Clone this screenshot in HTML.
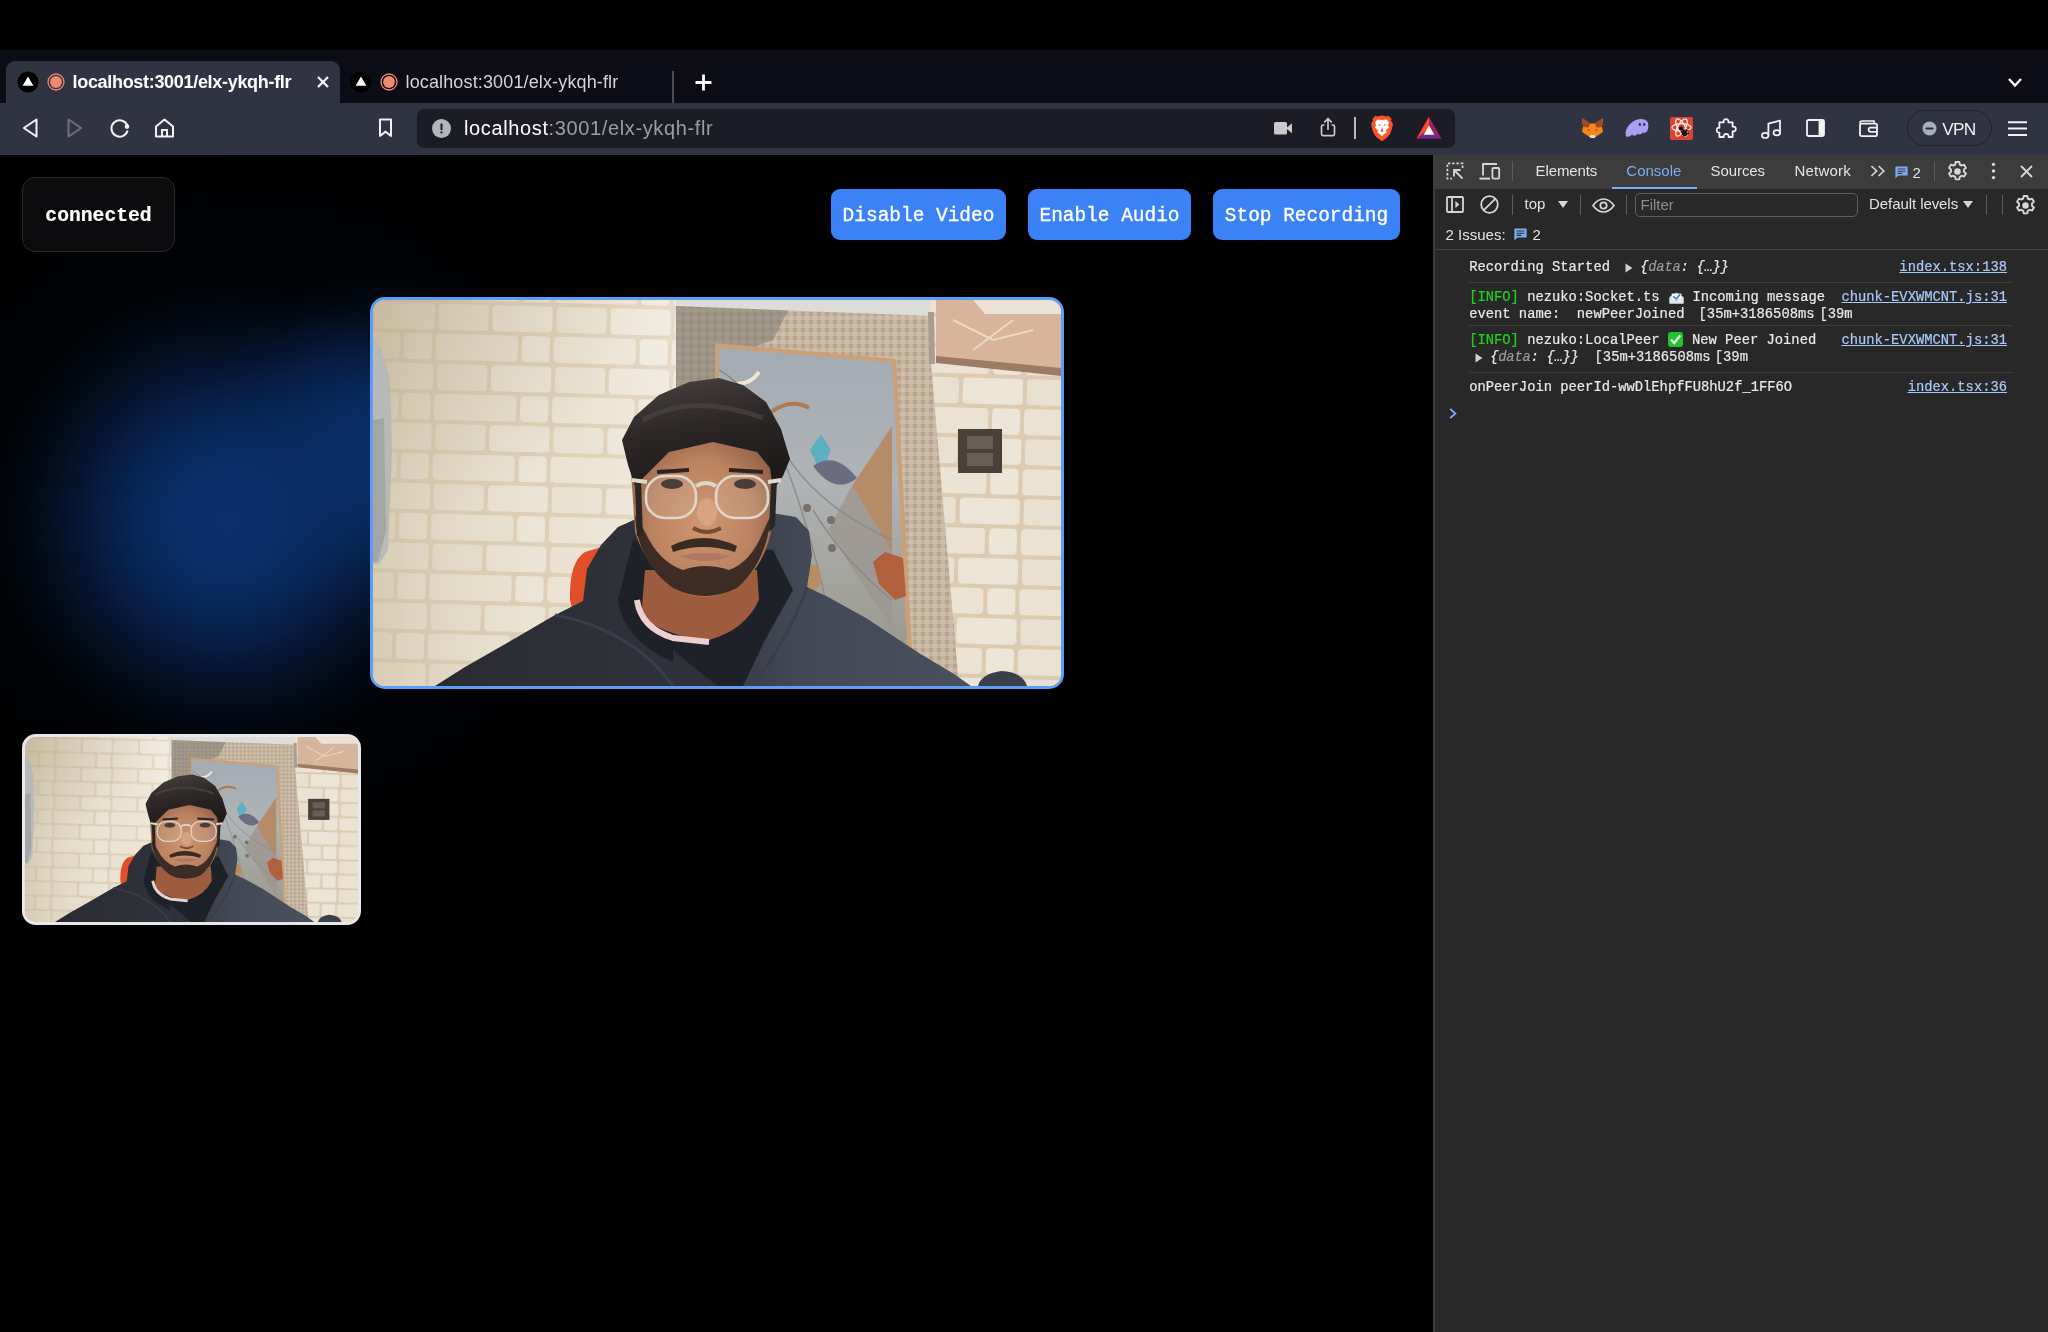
<!DOCTYPE html>
<html>
<head>
<meta charset="utf-8">
<title>localhost:3001/elx-ykqh-flr</title>
<style>
*{box-sizing:border-box;margin:0;padding:0}
html,body{width:2048px;height:1332px;overflow:hidden;background:#000}
body{position:relative;will-change:transform;font-family:"Liberation Sans",sans-serif;color:#fff}
.abs{position:absolute}
svg{position:absolute;overflow:visible}
#frame{left:0;top:50px;width:2048px;height:53px;background:#0c0c16}
#tab1{left:6px;top:61px;width:334px;height:42px;background:#303342;border-radius:9px 9px 0 0}
#toolbar{left:0;top:103px;width:2048px;height:52px;background:#303342}
#urlbar{left:417px;top:109px;width:1037.5px;height:38.5px;background:#1b1c26;border-radius:7px}
.tabtxt{top:71.3px;font-size:18px;line-height:22px;white-space:pre}
#page{left:0;top:155px;width:1433px;height:1177px;background:#000;overflow:hidden}
#glow{left:0;top:0;width:800px;height:800px;
 background:radial-gradient(circle at 226px 365px,rgba(11,47,107,1) 0.0px,rgba(11,47,107,0.97) 50.4px,rgba(11,47,107,0.8) 90.0px,rgba(11,47,107,0.62) 120.0px,rgba(11,47,107,0.48) 139.2px,rgba(11,47,107,0.28) 170.4px,rgba(11,47,107,0.13) 199.2px,rgba(11,47,107,0.04) 225.6px,rgba(11,47,107,0) 240.0px),
 radial-gradient(circle at 380px 295px,rgba(11,47,107,0.9) 0.0px,rgba(11,47,107,0.85) 50.4px,rgba(11,47,107,0.7) 72.0px,rgba(11,47,107,0.5) 99.0px,rgba(11,47,107,0.28) 126.0px,rgba(11,47,107,0.1) 153.0px,rgba(11,47,107,0) 180.0px),
 radial-gradient(circle at 250px 350px,rgba(8,30,70,.16) 0px,rgba(8,30,70,.1) 200px,rgba(8,30,70,.04) 300px,rgba(8,30,70,0) 380px)}
#badge{left:22px;top:22px;width:153px;height:75px;border:1px solid #2a2a2a;border-radius:13px;background:#0b0b0d;
 font-family:"Liberation Mono",monospace;font-weight:bold;font-size:19.7px;line-height:73px;padding-top:2px;text-align:center;color:#fff;-webkit-text-stroke:0.2px #fff}
.btn{top:34px;height:51px;background:#3b82f6;border-radius:9px;font-family:"Liberation Mono",monospace;font-size:19.47px;line-height:50px;padding-top:1.8px;text-align:center;color:#fff;white-space:pre;-webkit-text-stroke:0.35px #fff}
#vid1{left:370px;top:142px;width:694px;height:392px;border:3px solid #5a9ef8;border-radius:15px;overflow:hidden;background:#e6d9c3}
#vid2{left:22px;top:579px;width:339px;height:191px;border:3px solid #e8e8ea;border-radius:14px;overflow:hidden;background:#e6d9c3}
#vid1 svg,#vid2 svg{left:0;top:0;width:100%;height:100%}
#vid1 svg{filter:blur(0.6px)}#vid2 svg{filter:blur(0.3px)}
#dt{left:1433px;top:155px;width:615px;height:1177px;background:#282828;border-left:2px solid #3d3d3d}
#dttabs{left:0;top:0;width:613px;height:34px;background:#3c3c3c}
.dtt{top:7px;font-size:15px;line-height:20px;color:#e3e3e3;white-space:pre;letter-spacing:-0.1px}
.sep{width:1px;background:#5c5c5c}
.mono{font-family:"Liberation Mono",monospace;font-size:13.81px;line-height:17px;color:#e8e8e8;white-space:pre;-webkit-text-stroke:0.22px currentColor}
.lnk{color:#a8c7fa;text-decoration:underline}
.hr{left:34px;width:542.5px;height:1px;background:#3d3d3d}
</style>
</head>
<body>
<svg width="0" height="0" style="position:absolute">
<defs>
<pattern id="brick" width="118" height="60" patternUnits="userSpaceOnUse" patternTransform="rotate(1.5)">
<rect width="118" height="60" fill="#dccbb0"/>
<rect x="2" y="2" width="60" height="26" rx="4" fill="#ece4d4"/>
<rect x="66" y="2" width="50" height="26" rx="4" fill="#e9e0cf"/>
<rect x="-26" y="32" width="54" height="26" rx="4" fill="#ebe2d1"/>
<rect x="32" y="32" width="28" height="26" rx="4" fill="#ede5d6"/>
<rect x="64" y="32" width="54" height="26" rx="4" fill="#ebe2d1"/>
<rect x="92" y="32" width="54" height="26" rx="4" fill="#ebe2d1"/>
</pattern>
<pattern id="mosaic" width="8" height="8" patternUnits="userSpaceOnUse">
<rect width="8" height="8" fill="#c6b5a0"/>
<rect x="0" y="0" width="4" height="4" fill="#cfbfab"/>
<rect x="4" y="4" width="4" height="4" fill="#b8a48d"/>
</pattern>
<linearGradient id="glass" x1="0" y1="0" x2="0" y2="1">
<stop offset="0" stop-color="#a3abb4"/><stop offset="0.4" stop-color="#afb3b6"/><stop offset="0.7" stop-color="#a3a39d"/><stop offset="1" stop-color="#96938a"/>
</linearGradient>
<linearGradient id="wallshade" x1="0" y1="0" x2="1" y2="0">
<stop offset="0" stop-color="#c9bc9f" stop-opacity=".6"/><stop offset="0.35" stop-color="#d9ceb8" stop-opacity=".25"/><stop offset="0.7" stop-color="#f3ecdf" stop-opacity=".15"/><stop offset="1" stop-color="#fff" stop-opacity=".3"/>
</linearGradient>
<linearGradient id="hood" gradientUnits="userSpaceOnUse" x1="60" y1="0" x2="600" y2="0"><stop offset="0" stop-color="#2a2b32"/><stop offset="0.45" stop-color="#30323b"/><stop offset="0.68" stop-color="#434856"/><stop offset="1" stop-color="#4b505f"/></linearGradient>
<linearGradient id="hair" x1="0" y1="0" x2="0.3" y2="1"><stop offset="0" stop-color="#4a4543"/><stop offset="0.5" stop-color="#2d2827"/><stop offset="1" stop-color="#1e1a19"/></linearGradient>
<radialGradient id="vig" cx="0" cy="0" r="1" gradientUnits="userSpaceOnUse" gradientTransform="scale(260 220)"><stop offset="0" stop-color="#b3a486" stop-opacity=".45"/><stop offset="1" stop-color="#b3a486" stop-opacity="0"/></radialGradient>
<radialGradient id="skin" cx="0.5" cy="0.55" r="0.6">
<stop offset="0" stop-color="#cf9773"/><stop offset="0.6" stop-color="#bb8260"/><stop offset="1" stop-color="#8c5d43"/>
</radialGradient>
<symbol id="cam" viewBox="0 0 688 386" preserveAspectRatio="none">
<rect width="688" height="386" fill="url(#brick)"/>
<rect width="303" height="386" fill="url(#wallshade)"/>
<rect width="303" height="260" fill="url(#vig)"/>
<!-- left object -->
<path d="M0 36 L8 48 L17 80 L19 150 L15 250 L6 264 L0 264Z" fill="#b7bab6"/>
<path d="M0 120 L11 118 L13 230 L5 262 L0 262Z" fill="#a3a6a4"/>
<!-- door frame mosaic -->
<path d="M303 0 L556 0 L558 64 L586 386 L303 386Z" fill="url(#mosaic)"/>
<path d="M303 0 L420 0 L400 40 L345 60 L345 110 L303 90Z" fill="#7f7a73" opacity=".55"/>
<path d="M303 0 L557 0 L557 16 L303 6Z" fill="#dcdcd8"/>
<!-- glass -->
<path d="M342 43 L523 59 L541 386 L342 386Z" fill="#c9a078"/>
<path d="M346 48 L519 63 L536 386 L346 386Z" fill="url(#glass)"/>
<path d="M519 126 L479 186 L519 252Z" fill="#b48c68"/>
<path d="M519 252 L479 186 L455 230 L519 330Z" fill="#9d9690" opacity=".8"/>
<path d="M437 150 L448 134 L458 150 L448 174Z" fill="#5db0c2"/>
<path d="M440 166 Q462 150 484 178 Q462 196 440 166Z" fill="#6c6c80"/>
<path d="M398 112 Q418 98 436 108" stroke="#b07a50" stroke-width="4" fill="none"/>
<path d="M364 84 Q378 84 386 72" stroke="#f1e8da" stroke-width="4" fill="none"/>
<path d="M346 70 Q420 110 470 386" stroke="#8e8a86" stroke-width="1.5" fill="none"/>
<path d="M400 130 Q430 200 519 240" stroke="#8e8a86" stroke-width="1.5" fill="none"/>
<path d="M440 210 Q470 260 519 300" stroke="#8e8a86" stroke-width="1.5" fill="none"/>
<path d="M500 262 L512 252 L530 258 L533 296 L522 300 L506 284Z" fill="#b1603e"/>
<ellipse cx="437" cy="278" rx="11" ry="14" fill="#b98d63"/>
<circle cx="434" cy="208" r="4" fill="#77706c"/><circle cx="458" cy="220" r="4" fill="#77706c"/><circle cx="459" cy="248" r="4" fill="#77706c"/>
<!-- right beam -->
<path d="M563 0 L688 0 L688 74 L563 62Z" fill="#d6b59c"/>
<path d="M563 56 L688 68 L688 76 L563 63Z" fill="#9b7b63"/>
<path d="M600 0 L688 0 L688 14 L612 14Z" fill="#ebe2d4"/>
<path d="M555 12 L561 12 L562 64 L556 64Z" fill="#a89d8f"/>
<path d="M580 20 L620 40 L660 30 M600 50 L640 20" stroke="#efe2d2" stroke-width="2" fill="none" opacity=".8"/>
<!-- switch -->
<rect x="585" y="129" width="44" height="44" fill="#4b4038"/>
<rect x="594" y="136" width="26" height="13" fill="#6a5e54"/><rect x="594" y="153" width="26" height="13" fill="#6a5e54"/>
<!-- chair -->
<path d="M197 300 Q196 262 212 252 L232 246 L222 280 L214 312 L200 312Z" fill="#e04f28"/>
<!-- hoodie -->
<path d="M62 386 L92 367 L134 343 L182 315 L210 301 L214 269 L228 245 L245 227 L263 219 L300 225 L380 220 L399 213 L423 217 L436 231 L439 255 L434 287 L455 297 L493 318 L546 353 L581 374 L598 386Z" fill="url(#hood)"/>
<path d="M605 386 Q608 374 628 371 Q650 372 654 386Z" fill="#3a3f4b"/>
<path d="M245 300 Q250 340 300 362 L330 386 L370 386 L392 340 L420 290 L400 250 L260 240Z" fill="#1f2129"/>
<path d="M300 350 Q330 375 345 386 L300 386Z" fill="#2f313a"/>
<path d="M182 315 Q260 330 300 386 M434 287 Q420 330 380 386" stroke="#3a3d4a" stroke-width="3" fill="none"/>
<!-- neck -->
<path d="M272 270 L384 270 L386 300 Q372 330 336 340 Q300 338 268 318Z" fill="#9c5c3d"/>
<path d="M264 300 Q268 328 300 338 L336 342" stroke="#ecd0cf" stroke-width="6" fill="none"/>
<!-- face -->
<path d="M258 170 Q258 140 280 130 L380 128 Q400 140 400 172 L398 232 Q390 270 360 290 Q332 304 304 290 Q274 270 262 232Z" fill="url(#skin)"/>
<!-- beard -->
<path d="M262 215 Q264 262 300 288 Q332 304 364 288 Q394 262 398 215 L390 232 Q378 262 356 270 Q332 262 310 270 Q286 262 272 232Z" fill="#33261f" opacity=".92"/>
<path d="M298 246 Q330 230 364 246 L362 252 Q330 242 300 252Z" fill="#3a2a22"/>
<path d="M306 256 Q332 250 358 256 Q332 266 306 256Z" fill="#b07763"/>
<!-- eyes -->
<ellipse cx="299" cy="184" rx="11" ry="5" fill="#2c2220"/><ellipse cx="372" cy="184" rx="11" ry="5" fill="#2c2220"/>
<path d="M284 172 L316 170 M356 170 L390 172" stroke="#2c2220" stroke-width="4"/>
<ellipse cx="334" cy="212" rx="10" ry="14" fill="#dba685" opacity=".8"/>
<path d="M320 228 Q334 236 348 228" stroke="#7c4a34" stroke-width="4" fill="none"/>
<!-- hair -->
<path d="M249 140 L261 117 L286 95 L316 82 L346 78 L370 85 L393 102 L408 129 L417 159 L410 176 L400 190 L397 168 L384 152 L340 142 L296 152 L272 176 L262 186 L255 165Z" fill="url(#hair)"/>
<path d="M262 186 L264 236 L270 236 L268 180Z M398 182 L396 232 L402 226 L404 180Z" fill="#2a2625"/>
<path d="M270 120 Q320 92 390 118" stroke="#4a4442" stroke-width="5" fill="none" opacity=".7"/>
<!-- glasses -->
<g fill="rgba(230,225,215,.15)" stroke="#ddd8cc" stroke-width="2.6">
<rect x="273" y="176" width="50" height="42" rx="19"/>
<rect x="343" y="176" width="52" height="42" rx="19"/>
</g>
<path d="M259 180 L274 182 M323 186 Q333 180 343 186 M395 182 L408 180" stroke="#ddd8cc" stroke-width="4" fill="none"/>
</symbol>
</defs></svg>
<div class="abs" id="frame"></div>
<div class="abs" id="tab1"></div>
<div class="abs" id="toolbar"></div>
<div class="abs" id="urlbar"></div>

<!-- TAB 1 (active) -->
<svg style="left:17px;top:71px" width="22" height="22" viewBox="0 0 22 22"><circle cx="11" cy="11" r="10.5" fill="#000"/><path d="M11 5.6 L16.4 14.8 L5.6 14.8Z" fill="#fff"/></svg>
<svg style="left:47px;top:73px" width="18" height="18" viewBox="0 0 18 18"><circle cx="9" cy="9" r="8" fill="none" stroke="#f08a70" stroke-width="1.3"/><circle cx="9" cy="9" r="5.9" fill="#f08a70"/></svg>
<div class="abs tabtxt" style="left:72.5px;font-weight:bold;color:#fff;letter-spacing:-0.31px">localhost:3001/elx-ykqh-flr</div>
<svg style="left:317px;top:76px" width="12" height="12" viewBox="0 0 12 12"><path d="M1 1 L11 11 M11 1 L1 11" stroke="#fff" stroke-width="2.2" fill="none"/></svg>
<!-- TAB 2 -->
<svg style="left:350px;top:71px" width="22" height="22" viewBox="0 0 22 22"><circle cx="11" cy="11" r="10.5" fill="#000"/><path d="M11 5.6 L16.4 14.8 L5.6 14.8Z" fill="#fff"/></svg>
<svg style="left:380px;top:73px" width="18" height="18" viewBox="0 0 18 18"><circle cx="9" cy="9" r="8" fill="none" stroke="#f08a70" stroke-width="1.3"/><circle cx="9" cy="9" r="5.9" fill="#f08a70"/></svg>
<div class="abs tabtxt" style="left:405.5px;color:#d4d4d8;letter-spacing:0.14px">localhost:3001/elx-ykqh-flr</div>
<div class="abs" style="left:672px;top:71px;width:1.5px;height:32px;background:#4a4a50"></div>
<svg style="left:695px;top:74px" width="17" height="17" viewBox="0 0 17 17"><path d="M8.5 0.5 V16.5 M0.5 8.5 H16.5" stroke="#fff" stroke-width="2.8" fill="none"/></svg>
<svg style="left:2008px;top:78px" width="14" height="9" viewBox="0 0 14 9"><path d="M1 1 L7 7.5 L13 1" stroke="#fff" stroke-width="2.4" fill="none"/></svg>
<!-- NAV ICONS -->
<svg style="left:22px;top:118px" width="17" height="20" viewBox="0 0 17 20"><path d="M14.5 1.5 L14.5 18.5 L1.8 10Z" stroke="#f2f2f2" stroke-width="2" fill="none" stroke-linejoin="round"/></svg>
<svg style="left:66px;top:118px" width="17" height="20" viewBox="0 0 17 20"><path d="M2.5 1.5 L2.5 18.5 L15.2 10Z" stroke="#6f717a" stroke-width="2" fill="none" stroke-linejoin="round"/></svg>
<svg style="left:109px;top:117px" width="22" height="22" viewBox="0 0 22 22"><path d="M18.2 8.2 A8.2 8.2 0 1 0 18.6 13.6" stroke="#f2f2f2" stroke-width="2" fill="none"/><circle cx="18" cy="9.6" r="2.3" fill="#f2f2f2"/></svg>
<svg style="left:154px;top:118px" width="21" height="20" viewBox="0 0 21 20"><path d="M2 8.6 L10.5 1.6 L19 8.6 V18.4 H2Z" stroke="#f2f2f2" stroke-width="2" fill="none" stroke-linejoin="round"/><path d="M8 18 V12 H13 V18" stroke="#f2f2f2" stroke-width="2" fill="none"/></svg>
<svg style="left:378px;top:118px" width="15" height="20" viewBox="0 0 15 20"><path d="M2 1.5 H13 V18 L7.5 13.6 L2 18Z" stroke="#f2f2f2" stroke-width="2" fill="none" stroke-linejoin="round"/></svg>
<!-- URL BAR CONTENT -->
<svg style="left:432px;top:118.5px" width="19" height="19" viewBox="0 0 19 19"><circle cx="9.5" cy="9.5" r="9.5" fill="#b4b5ba"/><rect x="8.5" y="4.6" width="2" height="6.4" fill="#1b1c26"/><rect x="8.5" y="12.4" width="2" height="2.1" fill="#1b1c26"/></svg>
<div class="abs" style="left:464px;top:115px;font-size:20px;line-height:26px;letter-spacing:0.63px;white-space:pre;color:#fff">localhost<span style="color:#9c9da3">:3001/elx-ykqh-flr</span></div>
<svg style="left:1274px;top:122px" width="19" height="13" viewBox="0 0 19 13"><rect x="0" y="0" width="13" height="12.4" rx="1.5" fill="#c9c9cb"/><path d="M12 6.2 L18 1.2 V11.2Z" fill="#c9c9cb"/></svg>
<svg style="left:1320px;top:117px" width="16" height="20" viewBox="0 0 16 20"><path d="M4.5 8 H3 Q1.5 8 1.5 9.6 V17 Q1.5 18.6 3 18.6 H13 Q14.5 18.6 14.5 17 V9.6 Q14.5 8 13 8 H11.5" stroke="#c9c9cb" stroke-width="1.7" fill="none"/><path d="M8 13 V2 M4.2 5.4 L8 1.6 L11.8 5.4" stroke="#c9c9cb" stroke-width="1.7" fill="none"/></svg>
<div class="abs" style="left:1354px;top:117px;width:2px;height:22px;background:#b9b9bb"></div>
<svg style="left:1370px;top:115px" width="24" height="27" viewBox="0 0 24 27"><path d="M12 0.5 L16.6 1.6 L18.6 0.8 L21.6 4 L21 5.8 L23 9 L21.6 15 Q20.6 19 17.6 22 L12 26.2 L6.4 22 Q3.4 19 2.4 15 L1 9 L3 5.8 L2.4 4 L5.4 0.8 L7.4 1.6Z" fill="#fb542b"/><path d="M12 5 L16.6 4.4 L19 7.4 L18 10 L19 12.4 L15.8 15.4 L16.8 17.4 L13.6 19.6 L12 21.2 L10.4 19.6 L7.2 17.4 L8.2 15.4 L5 12.4 L6 10 L5 7.4 L7.4 4.4Z" fill="#fff"/><path d="M9 9 L11 10.4 L8.4 10.8Z M15 9 L13 10.4 L15.6 10.8Z M12 12.4 L13.4 16 L12 17.2 L10.6 16Z" fill="#fb542b"/></svg>
<svg style="left:1416px;top:116px" width="26" height="24" viewBox="0 0 26 24"><path d="M13 0.8 L25.4 22.6 H0.6Z" fill="#9e1f63"/><path d="M13 0.8 L13 12 L0.6 22.6Z" fill="#ff4724"/><path d="M0.6 22.6 L13 15.4 L25.4 22.6Z" fill="#662d91"/><path d="M13 9.4 L18.4 18.8 H7.6Z" fill="#fff"/></svg>
<!-- EXTENSIONS -->
<svg style="left:1581px;top:117px" width="23" height="22" viewBox="0 0 23 22"><path d="M1 1 L9 6.4 H14 L22 1 L21 10 L22 15 L15 19.6 L13 21 H10 L8 19.6 L1 15 L2 10Z" fill="#f6851b"/><path d="M1 1 L9 6.4 L7.6 10.4 L2 10Z M22 1 L14 6.4 L15.4 10.4 L21 10Z" fill="#9c4a1e"/><path d="M8 19.6 L10 18 H13 L15 19.6 L13 21 H10Z" fill="#e8dfd3"/><path d="M6 12 L9 12.6 L8 14.4Z M17 12 L14 12.6 L15 14.4Z" fill="#c0490f"/></svg>
<svg style="left:1625px;top:118px" width="24" height="20" viewBox="0 0 24 20"><path d="M1 18.6 Q-1 12 5 6 Q10 1 16 1 Q23.6 1 23.4 8 Q23.2 14 19.4 15 Q18.4 15.2 18 14 Q16.6 16.6 14.4 16.6 Q13 16.6 12.8 15.4 Q11 18 8.4 17.6 Q7.4 17.4 7.4 16.2 Q4.6 19.6 1 18.6Z" fill="#ab9ff2"/><ellipse cx="14.8" cy="6.4" rx="1.1" ry="1.7" fill="#303342"/><ellipse cx="19.2" cy="6.4" rx="1.1" ry="1.7" fill="#303342"/></svg>
<svg style="left:1670px;top:117px" width="23" height="23" viewBox="0 0 23 23"><rect width="23" height="23" rx="2" fill="#d9452f"/><g fill="none" stroke="#fbe9e2" stroke-width="1.3"><ellipse cx="11.5" cy="10.5" rx="9.6" ry="3.8"/><ellipse cx="11.5" cy="10.5" rx="9.6" ry="3.8" transform="rotate(60 11.5 10.5)"/><ellipse cx="11.5" cy="10.5" rx="9.6" ry="3.8" transform="rotate(120 11.5 10.5)"/></g><circle cx="11" cy="11.4" r="2.1" fill="#1a120e"/><ellipse cx="14.4" cy="15.8" rx="2.6" ry="3.6" transform="rotate(-35 14.4 15.8)" fill="#1a120e"/><path d="M10.6 15 L18.6 13.6 M11.6 17.4 L19 16.4 M13 19.6 L17 12" stroke="#1a120e" stroke-width="1.1"/></svg>
<svg style="left:1716px;top:118px" width="21" height="21" viewBox="0 0 21 21"><path d="M7.6 4.4 Q7.2 1.2 10 1.2 Q12.8 1.2 12.4 4.4 H16.6 V8.6 Q19.8 8.2 19.8 11 Q19.8 13.8 16.6 13.4 V19 H12.6 Q13 16 10.2 16 Q7.4 16 7.8 19 H3.4 V14.6 Q0.8 15 0.8 12.2 Q0.8 9.4 3.4 9.8 V4.4Z" stroke="#f2f2f2" stroke-width="1.8" fill="none" stroke-linejoin="round"/></svg>
<svg style="left:1761px;top:119px" width="21" height="21" viewBox="0 0 21 21"><path d="M7.4 16 V4.6 L19 1.6 V13.4" stroke="#f2f2f2" stroke-width="1.8" fill="none" stroke-linejoin="round"/><ellipse cx="4.2" cy="16.4" rx="3.3" ry="2.6" stroke="#f2f2f2" stroke-width="1.7" fill="none"/><ellipse cx="15.8" cy="13.8" rx="3.3" ry="2.6" stroke="#f2f2f2" stroke-width="1.7" fill="none"/></svg>
<svg style="left:1806px;top:119px" width="19" height="18" viewBox="0 0 19 18"><rect x="1" y="1" width="17" height="16" rx="1.5" stroke="#f2f2f2" stroke-width="1.8" fill="none"/><rect x="12.6" y="1" width="5.4" height="16" fill="#f2f2f2"/></svg>
<svg style="left:1859px;top:120px" width="19" height="17" viewBox="0 0 19 17"><path d="M1 3.4 Q1 1 3 1 H15 V3.6" stroke="#f2f2f2" stroke-width="1.6" fill="none"/><rect x="1" y="3.6" width="17" height="12.6" rx="1.6" stroke="#f2f2f2" stroke-width="1.8" fill="none"/><path d="M18 7.6 H11.6 Q9.6 7.6 9.6 9.6 Q9.6 11.8 11.6 11.8 H18" stroke="#f2f2f2" stroke-width="1.8" fill="none"/></svg>
<div class="abs" style="left:1907px;top:110px;width:85px;height:36px;border:1px solid #22232e;border-radius:18px"></div>
<svg style="left:1922px;top:121px" width="15" height="15" viewBox="0 0 15 15"><circle cx="7.5" cy="7.5" r="7" fill="#a9adbe"/><rect x="3.4" y="6.4" width="8.2" height="2.2" rx="1" fill="#303342"/></svg>
<div class="abs" style="left:1942.3px;top:117.5px;font-size:17.3px;line-height:22px;letter-spacing:-0.8px;color:#f2f2f2">VPN</div>
<svg style="left:2008px;top:121px" width="19" height="15" viewBox="0 0 19 15"><path d="M0 1.2 H19 M0 7.6 H19 M0 14 H19" stroke="#f2f2f2" stroke-width="2" fill="none"/></svg>


<div class="abs" id="page">
  <div class="abs" id="glow"></div>
  <div class="abs" id="badge">connected</div>
  <div class="abs btn" style="left:831px;width:175px">Disable Video</div>
  <div class="abs btn" style="left:1028px;width:163px">Enable Audio</div>
  <div class="abs btn" style="left:1213px;width:187px">Stop Recording</div>
  <div class="abs" id="vid1"><svg viewBox="0 0 688 386" preserveAspectRatio="none"><use href="#cam"/></svg></div>
  <div class="abs" id="vid2"><svg viewBox="0 0 688 386" preserveAspectRatio="none"><use href="#cam"/></svg></div>
</div>

<div class="abs" id="dt">

  <div class="abs" id="dttabs"></div>
  <!-- inspect icon -->
  <svg style="left:11px;top:7px" width="18" height="18" viewBox="0 0 18 18"><path d="M16.6 6 V1.4 H1.4 V16.6 H6" stroke="#d6d6d6" stroke-width="1.7" fill="none" stroke-dasharray="2.4 1.8"/><path d="M8 8 L16.6 16.6 M8 14.6 V8 H14.6" stroke="#d6d6d6" stroke-width="1.8" fill="none"/></svg>
  <!-- device icon -->
  <svg style="left:44px;top:8px" width="22" height="17" viewBox="0 0 22 17"><path d="M4 12.6 V1 H18" stroke="#d6d6d6" stroke-width="1.8" fill="none"/><path d="M0.4 15.6 H11" stroke="#d6d6d6" stroke-width="2" fill="none"/><rect x="13.4" y="5" width="6.8" height="10.6" rx="1" stroke="#d6d6d6" stroke-width="1.8" fill="none"/></svg>
  <div class="abs sep" style="left:77px;top:6px;height:20px"></div>
  <div class="abs dtt" style="left:100.5px;top:5.5px">Elements</div>
  <div class="abs dtt" style="left:191.3px;top:5.5px;color:#7cacf8;letter-spacing:0">Console</div>
  <div class="abs dtt" style="left:275.6px;top:5.5px">Sources</div>
  <div class="abs dtt" style="left:359.5px;top:5.5px;letter-spacing:0.22px">Network</div>
  <div class="abs" style="left:177px;top:31.5px;width:84.5px;height:2.5px;background:#7cacf8"></div>
  <svg style="left:435px;top:10px" width="16" height="12" viewBox="0 0 16 12"><path d="M1.4 1 L6.6 6 L1.4 11 M8.6 1 L13.8 6 L8.6 11" stroke="#d6d6d6" stroke-width="1.7" fill="none"/></svg>
  <svg style="left:459.5px;top:10.5px" width="13" height="13" viewBox="0 0 13 13"><path d="M1 0.6 H12 Q12.6 0.6 12.6 1.2 V9 Q12.6 9.6 12 9.6 H3.6 L0.4 12.6 V1.2 Q0.4 0.6 1 0.6Z" fill="#7cacf8"/><path d="M2.6 3 H10.4 M2.6 5.2 H10.4 M2.6 7.4 H7.4" stroke="#3c3c3c" stroke-width="1.1"/></svg>
  <div class="abs dtt" style="left:477.5px;top:8px;font-size:15px">2</div>
  <div class="abs sep" style="left:499px;top:6px;height:20px"></div>
  <svg class="gear" style="left:510.5px;top:4.5px" width="23" height="23" viewBox="0 0 24 24"><path d="M13.9 2 l.5 2.7 a7.6 7.6 0 0 1 1.9 1.1 l2.6-.9 1.9 3.3 -2.1 1.8 a7.6 7.6 0 0 1 0 2.2 l2.1 1.8 -1.9 3.3 -2.6-.9 a7.6 7.6 0 0 1 -1.9 1.1 l-.5 2.7 h-3.8 l-.5-2.7 a7.6 7.6 0 0 1 -1.9-1.1 l-2.6.9 -1.9-3.3 2.1-1.8 a7.6 7.6 0 0 1 0-2.2 l-2.1-1.8 1.9-3.3 2.6.9 a7.6 7.6 0 0 1 1.9-1.1 l.5-2.7Z" stroke="#d6d6d6" stroke-width="2" fill="none" stroke-linejoin="round"/><circle cx="12" cy="12" r="3.4" fill="#d6d6d6"/></svg>
  <svg style="left:555.5px;top:7px" width="5" height="18" viewBox="0 0 5 18"><circle cx="2.5" cy="2.4" r="1.7" fill="#d6d6d6"/><circle cx="2.5" cy="9" r="1.7" fill="#d6d6d6"/><circle cx="2.5" cy="15.6" r="1.7" fill="#d6d6d6"/></svg>
  <svg style="left:584.5px;top:9.5px" width="13" height="13" viewBox="0 0 13 13"><path d="M1 1 L12 12 M12 1 L1 12" stroke="#d6d6d6" stroke-width="1.8" fill="none"/></svg>

  <!-- console toolbar -->
  <svg style="left:10.5px;top:40.8px" width="18" height="17" viewBox="0 0 18 17"><rect x="1" y="1" width="16" height="15" rx="1" stroke="#d6d6d6" stroke-width="1.8" fill="none"/><path d="M6 1 V16" stroke="#d6d6d6" stroke-width="1.8"/><path d="M9.4 5 L13.4 8.5 L9.4 12Z" fill="#d6d6d6"/></svg>
  <svg style="left:44.7px;top:39.8px" width="19" height="19" viewBox="0 0 19 19"><circle cx="9.5" cy="9.5" r="8.3" stroke="#d6d6d6" stroke-width="1.8" fill="none"/><path d="M3.8 15.2 L15.2 3.8" stroke="#d6d6d6" stroke-width="1.8"/></svg>
  <div class="abs sep" style="left:77px;top:40px;height:20px"></div>
  <div class="abs dtt" style="left:89.6px;top:39.3px;letter-spacing:0">top</div>
  <svg style="left:123px;top:46px" width="10" height="7" viewBox="0 0 10 7"><path d="M0 0 H10 L5 7Z" fill="#d6d6d6"/></svg>
  <div class="abs sep" style="left:144.5px;top:40px;height:20px"></div>
  <svg style="left:157px;top:42.5px" width="23" height="15" viewBox="0 0 23 15"><path d="M1 7.5 Q5.6 1 11.5 1 Q17.4 1 22 7.5 Q17.4 14 11.5 14 Q5.6 14 1 7.5Z" stroke="#d6d6d6" stroke-width="1.7" fill="none"/><circle cx="11.5" cy="7.5" r="3.2" stroke="#d6d6d6" stroke-width="1.7" fill="none"/></svg>
  <div class="abs sep" style="left:191px;top:40px;height:20px"></div>
  <div class="abs" style="left:200px;top:38px;width:223px;height:24px;border:1px solid #5e5e5e;border-radius:5px"></div>
  <div class="abs dtt" style="left:205.5px;top:39.8px;color:#8f8f8f;letter-spacing:0">Filter</div>
  <div class="abs dtt" style="left:434px;top:39.3px;letter-spacing:-0.07px">Default levels</div>
  <svg style="left:527.5px;top:46px" width="10" height="7" viewBox="0 0 10 7"><path d="M0 0 H10 L5 7Z" fill="#d6d6d6"/></svg>
  <div class="abs sep" style="left:550.5px;top:40px;height:20px"></div>
  <div class="abs sep" style="left:566.5px;top:40px;height:20px"></div>
  <svg class="gear" style="left:579px;top:38.5px" width="23" height="23" viewBox="0 0 24 24"><path d="M13.9 2 l.5 2.7 a7.6 7.6 0 0 1 1.9 1.1 l2.6-.9 1.9 3.3 -2.1 1.8 a7.6 7.6 0 0 1 0 2.2 l2.1 1.8 -1.9 3.3 -2.6-.9 a7.6 7.6 0 0 1 -1.9 1.1 l-.5 2.7 h-3.8 l-.5-2.7 a7.6 7.6 0 0 1 -1.9-1.1 l-2.6.9 -1.9-3.3 2.1-1.8 a7.6 7.6 0 0 1 0-2.2 l-2.1-1.8 1.9-3.3 2.6.9 a7.6 7.6 0 0 1 1.9-1.1 l.5-2.7Z" stroke="#d6d6d6" stroke-width="2" fill="none" stroke-linejoin="round"/><circle cx="12" cy="12" r="3.4" fill="#d6d6d6"/></svg>

  <!-- issues row -->
  <div class="abs dtt" style="left:10.6px;top:69.7px;letter-spacing:0">2 Issues:</div>
  <svg style="left:79px;top:72.8px" width="13" height="13" viewBox="0 0 13 13"><path d="M1 0.6 H12 Q12.6 0.6 12.6 1.2 V9 Q12.6 9.6 12 9.6 H3.6 L0.4 12.6 V1.2 Q0.4 0.6 1 0.6Z" fill="#7cacf8"/><path d="M2.6 3 H10.4 M2.6 5.2 H10.4 M2.6 7.4 H7.4" stroke="#282828" stroke-width="1.1"/></svg>
  <div class="abs dtt" style="left:97.6px;top:69.7px">2</div>
  <div class="abs" style="left:0;top:93.5px;width:613px;height:1px;background:#444"></div>

  <!-- messages -->
  <div class="abs mono" style="left:34.2px;top:103.5px">Recording Started</div>
  <svg style="left:189.5px;top:107.5px" width="8" height="10" viewBox="0 0 8 10"><path d="M0.5 0.5 L7.5 5 L0.5 9.5Z" fill="#d0d0d0"/></svg>
  <div class="abs mono" style="left:205.3px;top:103.5px;font-style:italic;letter-spacing:-0.25px">{<span style="color:#9b9b9b">data</span>: {…}}</div>
  <div class="abs mono lnk" style="right:41px;top:103.8px">index.tsx:138</div>
  <div class="abs hr" style="top:127.2px"></div>

  <div class="abs mono" style="left:34.2px;top:133.7px"><span style="color:#1fd11f">[INFO]</span> nezuko:Socket.ts</div>
  <svg style="left:233.5px;top:136px" width="15" height="13" viewBox="0 0 15 13"><path d="M0.5 6 L7.5 1.4 L14.5 6 V12.4 H0.5Z" fill="#cfd6de"/><path d="M2.6 2.6 H12.4 V8.6 H2.6Z" fill="#f4f6f8"/><path d="M0.5 6.4 L7.5 10.4 L14.5 6.4 V12.4 H0.5Z" fill="#e1e6ec"/><path d="M4 5.4 L7.4 8 L11 3.6" stroke="#3b78d8" stroke-width="1.6" fill="none"/></svg>
  <div class="abs mono" style="left:257.5px;top:133.7px">Incoming message</div>
  <div class="abs mono lnk" style="right:41px;top:134px">chunk-EVXWMCNT.js:31</div>
  <div class="abs mono" style="left:34.2px;top:150.6px">event name:  newPeerJoined</div>
  <div class="abs mono" style="left:263.6px;top:150.6px">[35m+3186508ms</div>
  <div class="abs mono" style="left:384.4px;top:150.6px">[39m</div>
  <div class="abs hr" style="top:170.3px"></div>

  <div class="abs mono" style="left:34.2px;top:176.8px"><span style="color:#1fd11f">[INFO]</span> nezuko:LocalPeer</div>
  <div class="abs" style="left:233px;top:177px;width:15px;height:15px;border-radius:3px;background:#1fc62a"></div>
  <svg style="left:233px;top:177px" width="15" height="15" viewBox="0 0 15 15"><path d="M3 7.6 L6.2 11 L12.2 3.4" stroke="#fff" stroke-width="2.2" fill="none"/></svg>
  <div class="abs mono" style="left:257px;top:176.8px">New Peer Joined</div>
  <div class="abs mono lnk" style="right:41px;top:177.1px">chunk-EVXWMCNT.js:31</div>
  <svg style="left:40.3px;top:197.8px" width="8" height="10" viewBox="0 0 8 10"><path d="M0.5 0.5 L7.5 5 L0.5 9.5Z" fill="#d0d0d0"/></svg>
  <div class="abs mono" style="left:55.3px;top:193.8px;font-style:italic;letter-spacing:-0.25px">{<span style="color:#9b9b9b">data</span>: {…}}</div>
  <div class="abs mono" style="left:159.6px;top:193.8px">[35m+3186508ms</div>
  <div class="abs mono" style="left:279.8px;top:193.8px">[39m</div>
  <div class="abs hr" style="top:217px"></div>

  <div class="abs mono" style="left:34.2px;top:223.6px">onPeerJoin peerId-wwDlEhpfFU8hU2f_1FF6O</div>
  <div class="abs mono lnk" style="right:41px;top:223.9px">index.tsx:36</div>
  <svg style="left:13.8px;top:252.8px" width="8" height="11" viewBox="0 0 8 11"><path d="M1.2 1 L6.4 5.5 L1.2 10" stroke="#7cacf8" stroke-width="1.7" fill="none"/></svg>
</div>
</body>
</html>
